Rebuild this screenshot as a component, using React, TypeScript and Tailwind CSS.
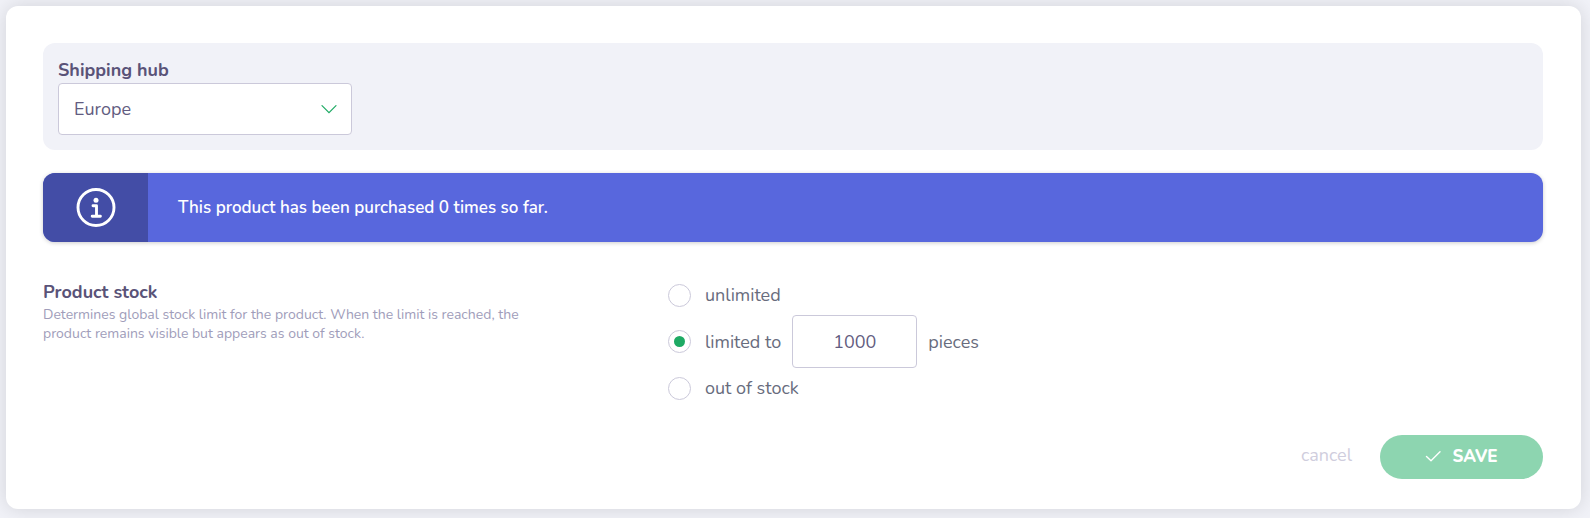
import { useState } from 'react';

type StockMode = 'unlimited' | 'limited' | 'out';

const hubs = ['Europe', 'North America', 'Asia'];

const radioClass =
  'grid size-[23px] shrink-0 cursor-pointer appearance-none place-items-center rounded-full border border-[#cbc9da] bg-white before:size-[11px] before:rounded-full checked:before:bg-[#1eaa64]';

function ChevronIcon() {
  return (
    <svg
      viewBox="0 0 16 10"
      className="pointer-events-none absolute right-[15px] h-[10px] w-4"
      fill="none"
      stroke="#1eaa64"
      strokeWidth="1.2"
      strokeLinecap="round"
      aria-hidden="true"
    >
      <path d="M1 1.6 8 8.6 15 1.6" />
    </svg>
  );
}

function InfoIcon() {
  return (
    <svg viewBox="0 0 40 40" className="size-10" fill="none" stroke="#fff" aria-hidden="true">
      <circle cx="20" cy="19.5" r="18" strokeWidth="2.9" />
      <circle cx="20" cy="12.2" r="2.5" fill="#fff" stroke="none" />
      <path d="M17 17.7h3.5v10M16.2 28.2h8.2" strokeWidth="2.9" strokeLinecap="round" strokeLinejoin="round" />
    </svg>
  );
}

function CheckIcon() {
  return (
    <svg
      viewBox="0 0 16 12"
      className="h-3 w-4"
      fill="none"
      stroke="#fff"
      strokeWidth="1.4"
      strokeLinecap="round"
      strokeLinejoin="round"
      aria-hidden="true"
    >
      <path d="M1.5 5.4 6 9.8 15 .8" />
    </svg>
  );
}

export default function App() {
  const [hub, setHub] = useState('Europe');
  const [mode, setMode] = useState<StockMode>('limited');
  const [limit, setLimit] = useState('1000');

  return (
    <div className="min-h-screen bg-[#f1f2f8] pt-[6px] pr-[9px] pb-[9px] pl-[6px] font-[Nunito,Lato,sans-serif] text-lg leading-6 text-[#686c7d]">
      <main className="rounded-xl bg-white pt-[37px] pr-[38px] pb-[30px] pl-[37px] shadow-[0_0_20px_rgba(0,0,0,0.13)]">

        {/* Shipping hub */}
        <section className="rounded-xl bg-[#f1f2f8] p-[15px]">
          <label htmlFor="hub" className="block leading-[25px] font-bold text-[#5a5378]">
            Shipping hub
          </label>
          <div className="relative flex w-full max-w-[294px] items-center">
            <select
              id="hub"
              value={hub}
              onChange={e => setHub(e.target.value)}
              className="h-[52px] w-full appearance-none rounded border border-[#cbc9da] bg-white px-[15px] text-[#625c80]"
            >
              {hubs.map(h => <option key={h}>{h}</option>)}
            </select>
            <ChevronIcon />
          </div>
        </section>

        {/* Info bar */}
        <div role="status" className="mt-[23px] flex min-h-[69px] overflow-hidden rounded-xl bg-[#5867dd] text-white shadow-[0_1px_4px_rgba(0,0,0,0.2)]">
          <div className="flex w-[105px] shrink-0 items-center justify-center bg-[#434da6]">
            <InfoIcon />
          </div>
          <p className="self-center px-[30px] text-[17px] font-semibold">This product has been purchased 0 times so far.</p>
        </div>

        {/* Stock */}
        <section className="mt-[37px] grid grid-cols-12">
          <div className="col-span-5 pr-[120px]">
            <h2 id="stock-title" className="leading-[26px] font-bold text-[#5a5378]">Product stock</h2>
            <p className="text-sm leading-[19px] text-[#a09dba]">
              Determines global stock limit for the product. When the limit is reached, the product remains visible but appears as out of stock.
            </p>
          </div>
          <div role="radiogroup" aria-labelledby="stock-title" className="col-span-7 flex flex-col items-start gap-2 pt-1">
            <label className="flex items-center gap-[14px]">
              <input type="radio" name="stock" className={radioClass} checked={mode === 'unlimited'} onChange={() => setMode('unlimited')} />
              unlimited
            </label>
            <div className="flex items-center gap-[11px]">
              <label className="flex items-center gap-[14px]">
                <input type="radio" name="stock" className={radioClass} checked={mode === 'limited'} onChange={() => setMode('limited')} />
                limited to
              </label>
              <input
                id="limit"
                type="text"
                inputMode="numeric"
                value={limit}
                onChange={e => setLimit(e.target.value)}
                className="h-[53px] w-[125px] rounded border border-[#cbc9da] bg-white text-center text-[#625c80]"
              />
              <label htmlFor="limit">pieces</label>
            </div>
            <label className="flex items-center gap-[14px]">
              <input type="radio" name="stock" className={radioClass} checked={mode === 'out'} onChange={() => setMode('out')} />
              out of stock
            </label>
          </div>
        </section>

        {/* Actions */}
        <div className="mt-[35px] flex items-center justify-end gap-7">
          <button type="button" className="pb-1 text-[#cfcddd]">cancel</button>
          <button type="button" className="flex h-11 w-[163px] items-center justify-center gap-[11px] rounded-full bg-[#8dd5b0] text-[17px] font-extrabold text-white">
            <CheckIcon />
            SAVE
          </button>
        </div>
      </main>
    </div>
  );
}
